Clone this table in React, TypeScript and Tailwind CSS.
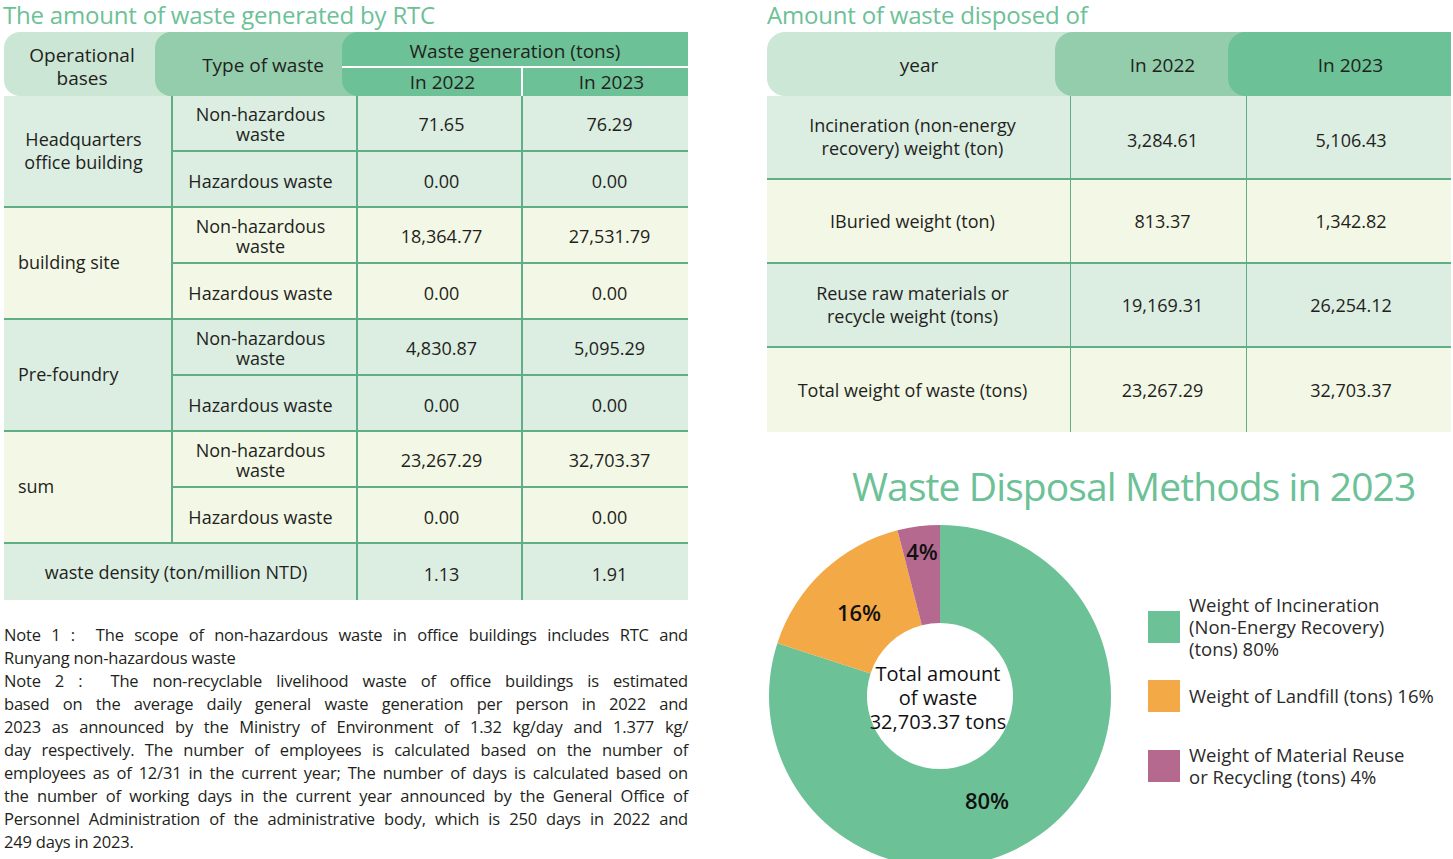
import React from "react";

const siteRows = [
  { name: "Headquarters office building", center: true, bg: "bg-[#dcede2]", values: [["71.65", "76.29"], ["0.00", "0.00"]] },
  { name: "building site", center: false, bg: "bg-[#f3f7e6]", values: [["18,364.77", "27,531.79"], ["0.00", "0.00"]] },
  { name: "Pre-foundry", center: false, bg: "bg-[#dcede2]", values: [["4,830.87", "5,095.29"], ["0.00", "0.00"]] },
  { name: "sum", center: false, bg: "bg-[#f3f7e6]", values: [["23,267.29", "32,703.37"], ["0.00", "0.00"]] },
];

const disposalRows = [
  { label: ["Incineration (non-energy", "recovery) weight (ton)"], y2022: "3,284.61", y2023: "5,106.43", bg: "bg-[#dcede2]" },
  { label: ["IBuried weight (ton)"], y2022: "813.37", y2023: "1,342.82", bg: "bg-[#f3f7e6]" },
  { label: ["Reuse raw materials or", "recycle weight (tons)"], y2022: "19,169.31", y2023: "26,254.12", bg: "bg-[#dcede2]" },
  { label: ["Total weight of waste (tons)"], y2022: "23,267.29", y2023: "32,703.37", bg: "bg-[#f3f7e6]" },
];

const noteLines: { text: string; justify: boolean }[] = [
  { text: "Note 1 :  The scope of non-hazardous waste in office buildings includes RTC and", justify: true },
  { text: "Runyang non-hazardous waste", justify: false },
  { text: "Note 2 :  The non-recyclable livelihood waste of office buildings is estimated", justify: true },
  { text: "based on the average daily general waste generation per person in 2022 and", justify: true },
  { text: "2023 as announced by the Ministry of Environment of 1.32 kg/day and 1.377 kg/", justify: true },
  { text: "day respectively. The number of employees is calculated based on the number of", justify: true },
  { text: "employees as of 12/31 in the current year; The number of days is calculated based on", justify: true },
  { text: "the number of working days in the current year announced by the General Office of", justify: true },
  { text: "Personnel Administration of the administrative body, which is 250 days in 2022 and", justify: true },
  { text: "249 days in 2023.", justify: false },
];

// donut geometry
const CX = 171;
const CY = 171;
const R_OUT = 171;
const R_IN = 73;

function pt(r: number, deg: number) {
  const a = (deg * Math.PI) / 180;
  return [CX + r * Math.sin(a), CY - r * Math.cos(a)];
}

function slice(a0: number, a1: number) {
  const large = a1 - a0 > 180 ? 1 : 0;
  const [x0, y0] = pt(R_OUT, a0);
  const [x1, y1] = pt(R_OUT, a1);
  const [x2, y2] = pt(R_IN, a1);
  const [x3, y3] = pt(R_IN, a0);
  return `M${x0} ${y0} A${R_OUT} ${R_OUT} 0 ${large} 1 ${x1} ${y1} L${x2} ${y2} A${R_IN} ${R_IN} 0 ${large} 0 ${x3} ${y3} Z`;
}

function Donut() {
  return (
    <svg width={344} height={344} viewBox="0 0 344 344" className="shrink-0">
      <path d={slice(0, 288)} fill="#6cc196" />
      <path d={slice(288, 345.6)} fill="#f4a947" />
      <path d={slice(345.6, 360)} fill="#b5698f" />
      <g fontFamily="'Open Sans', sans-serif" fill="#111">
        <text x={153} y={29} fontSize={22} fontWeight={600} textAnchor="middle" dominantBaseline="middle">4%</text>
        <text x={90} y={90} fontSize={22} fontWeight={600} textAnchor="middle" dominantBaseline="middle">16%</text>
        <text x={218} y={278} fontSize={22} fontWeight={600} textAnchor="middle" dominantBaseline="middle">80%</text>
        <text x={169} y={151} fontSize={20} fontWeight={500} textAnchor="middle" dominantBaseline="middle">Total amount</text>
        <text x={169} y={175} fontSize={20} fontWeight={500} textAnchor="middle" dominantBaseline="middle">of waste</text>
        <text x={169} y={199} fontSize={20} fontWeight={500} textAnchor="middle" dominantBaseline="middle">32,703.37 tons</text>
      </g>
    </svg>
  );
}

export default function App() {
  return (
    <div className="h-[859px] w-[1453px] overflow-hidden bg-white font-['Open_Sans',sans-serif] text-[#231f20]">
      <div className="flex gap-[79px] pl-1">
        {/* Left: waste generated */}
        <div className="w-[684px] shrink-0">
          <h2 className="-ml-[1px] h-[32px] whitespace-nowrap text-[24px] leading-[29px] tracking-[-0.2px] text-[#6cc196]">
            The amount of waste generated by RTC
          </h2>

          {/* Header */}
          <div className="flex h-[64px] text-[19px] leading-[23px]">
            <div className="flex w-[168px] shrink-0 items-center justify-center rounded-l-[16px] bg-[#cce6d6] pr-[12px] pt-[6px] text-center">
              Operational
              <br />
              bases
            </div>
            <div className="-ml-[17px] flex w-[203px] shrink-0 items-center justify-center rounded-l-[16px] bg-[#93cdac] pl-[13px] pt-[3px]">
              Type of waste
            </div>
            <div className="-ml-[16px] flex flex-1 flex-col rounded-l-[16px] bg-[#6cc196]">
              <div className="flex h-[36px] items-center justify-center border-b-2 border-white pt-[4px]">
                Waste generation (tons)
              </div>
              <div className="flex flex-1">
                <div className="flex w-[181px] items-center justify-center border-r-2 border-white pl-[22px]">In 2022</div>
                <div className="flex flex-1 items-center justify-center pl-[12px]">In 2023</div>
              </div>
            </div>
          </div>

          {/* Body */}
          <div className="grid grid-cols-[167px_183px_163px_165px] grid-rows-[repeat(8,54px)_56px] gap-[2px] bg-[#5fae85] text-[18px] leading-[20px]">
            {siteRows.map((site) => (
              <React.Fragment key={site.name}>
                <div
                  className={`row-span-2 flex items-center ${site.bg} ${
                    site.center ? "justify-center pl-1 pr-3 text-center leading-[23px]" : "pl-[14px] pb-[3px]"
                  }`}
                >
                  {site.center ? (
                    <span>
                      Headquarters
                      <br />
                      office building
                    </span>
                  ) : (
                    site.name
                  )}
                </div>
                <div className={`flex items-center justify-center pr-[8px] pt-[2px] text-center ${site.bg}`}>
                  Non-hazardous
                  <br />
                  waste
                </div>
                <div className={`flex items-center justify-center pl-[4px] pt-[2px] ${site.bg}`}>{site.values[0][0]}</div>
                <div className={`flex items-center justify-center pl-[8px] pt-[2px] ${site.bg}`}>{site.values[0][1]}</div>
                <div className={`flex items-center justify-center pr-[8px] pt-[3px] ${site.bg}`}>Hazardous waste</div>
                <div className={`flex items-center justify-center pl-[4px] pt-[3px] ${site.bg}`}>{site.values[1][0]}</div>
                <div className={`flex items-center justify-center pl-[8px] pt-[3px] ${site.bg}`}>{site.values[1][1]}</div>
              </React.Fragment>
            ))}
            <div className="col-span-2 flex items-center justify-center bg-[#dcede2] pr-[8px]">waste density (ton/million NTD)</div>
            <div className="flex items-center justify-center bg-[#dcede2] pl-[4px] pt-[3px]">1.13</div>
            <div className="flex items-center justify-center bg-[#dcede2] pl-[8px] pt-[3px]">1.91</div>
          </div>

          {/* Notes */}
          <div className="mt-[23px] text-[16.5px] leading-[23px] tracking-[-0.2px] text-[#231f20]">
            {noteLines.map((line, i) => (
              <span
                key={i}
                className={`block whitespace-pre ${line.justify ? "text-justify [text-align-last:justify]" : ""}`}
              >
                {line.text}
              </span>
            ))}
          </div>
        </div>

        {/* Right: waste disposed */}
        <div className="w-[684px] shrink-0">
          <h2 className="h-[32px] whitespace-nowrap text-[24px] leading-[29px] tracking-[-0.2px] text-[#6cc196]">
            Amount of waste disposed of
          </h2>

          <div className="flex h-[64px] text-[19px]">
            <div className="flex w-[324px] shrink-0 items-center justify-center rounded-l-[18px] bg-[#cde7d7] pr-[20px] pt-[3px]">
              year
            </div>
            <div className="-ml-[36px] flex w-[211px] shrink-0 items-center justify-center rounded-l-[18px] bg-[#93cdac] pl-[24px] pr-[20px] pt-[3px]">
              In 2022
            </div>
            <div className="-ml-[38px] flex flex-1 items-center justify-center rounded-l-[18px] bg-[#6cc196] pl-[22px] pt-[3px]">
              In 2023
            </div>
          </div>

          <div className="grid grid-cols-[303px_175px_204px] grid-rows-[82px_82px_82px_84px] gap-x-px gap-y-[2px] bg-[#5fae85] text-[18px] leading-[23px]">
            {disposalRows.map((row, i) => (
              <React.Fragment key={row.y2022}>
                <div className={`flex flex-col items-center justify-center pr-[12px] text-center ${row.bg}`}>
                  {row.label.map((l) => (
                    <span key={l}>{l}</span>
                  ))}
                </div>
                <div className={`flex items-center justify-center pl-[8px] ${i === 0 ? "pt-[6px]" : ""} ${row.bg}`}>
                  {row.y2022}
                </div>
                <div className={`flex items-center justify-center pl-[4px] ${i === 0 ? "pt-[6px]" : ""} ${row.bg}`}>
                  {row.y2023}
                </div>
              </React.Fragment>
            ))}
          </div>

          {/* Chart */}
          <h3 className="mt-[30px] whitespace-nowrap pl-[85px] text-[39px] leading-[48px] tracking-[-0.9px] text-[#6cc196]">
            Waste Disposal Methods in 2023
          </h3>
          <div className="mt-[15px] flex pl-[2px]">
            <Donut />
            <div className="ml-[35px] flex flex-col text-[18.5px] leading-[22px] text-[#2a2a2a]">
              <div className="mt-[69px] flex items-center gap-[9px]">
                <span className="h-[32px] w-[32px] shrink-0 bg-[#6cc196]" />
                <span>
                  Weight of Incineration
                  <br />
                  (Non-Energy Recovery)
                  <br />
                  (tons) 80%
                </span>
              </div>
              <div className="mt-[20px] flex items-center gap-[9px]">
                <span className="h-[32px] w-[32px] shrink-0 bg-[#f4a947]" />
                <span>Weight of Landfill (tons) 16%</span>
              </div>
              <div className="mt-[32px] flex items-center gap-[9px]">
                <span className="h-[32px] w-[32px] shrink-0 bg-[#b5698f]" />
                <span>
                  Weight of Material Reuse
                  <br />
                  or Recycling (tons) 4%
                </span>
              </div>
            </div>
          </div>
        </div>
      </div>
    </div>
  );
}
